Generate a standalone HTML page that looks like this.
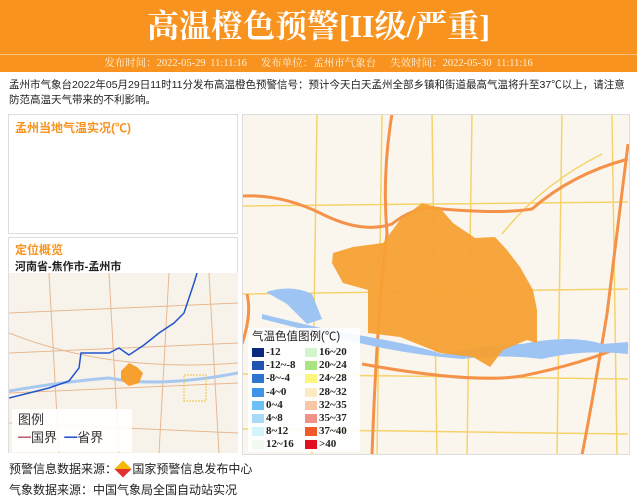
<!DOCTYPE html><html><head><meta charset="utf-8"><style>
*{margin:0;padding:0;box-sizing:border-box}
body{width:637px;height:500px;background:#fff;font-family:"Liberation Sans","Noto Sans CJK SC",sans-serif;position:relative;overflow:hidden}
.hd{position:absolute;left:0;top:0;width:637px;height:55px;background:#F7931E;color:#fff;text-align:center;font:bold 32px/52px "Liberation Serif","Noto Serif CJK SC",serif}
.ln{position:absolute;left:0;top:54px;width:637px;height:1px;background:#FBC37E}
.sb{position:absolute;left:0;top:55px;width:637px;height:17px;background:#F7931E;color:#FFF0DA;text-align:center;font:10.5px/17px "Liberation Serif","Noto Serif CJK SC",serif;word-spacing:2px}
.tx{position:absolute;left:9px;top:78px;width:622px;font-size:10.5px;line-height:15px;color:#222}
.bx{position:absolute;border:1px solid #ddd;background:#fff}
.t1{color:#F7931E;font-size:12px;font-weight:bold}
.ft{position:absolute;left:9px;font-size:12px;color:#222}
.lg{position:absolute;width:112px;height:124px;background:rgba(255,255,255,.9);font:bold 11px "Liberation Serif",serif;color:#222}
.lg div.r{position:absolute}
.lg i{display:inline-block;width:12px;height:9px;vertical-align:middle;margin-right:2px}
</style></head><body>
<div class="hd">高温橙色预警[II级/严重]</div><div class="ln"></div>
<div class="sb">发布时间：2022-05-29 11:11:16 &nbsp; 发布单位：孟州市气象台 &nbsp; 失效时间：2022-05-30 11:11:16</div>
<div class="tx">孟州市气象台2022年05月29日11时11分发布高温橙色预警信号：预计今天白天孟州全部乡镇和街道最高气温将升至37℃以上，请注意防范高温天气带来的不利影响。</div>
<div class="bx" style="left:8px;top:114px;width:230px;height:120px;padding:4px 6px"><div class="t1">孟州当地气温实况(℃)</div></div>
<div class="bx" style="left:8px;top:237px;width:230px;height:216px">
<div style="padding:3px 6px"><div class="t1">定位概览</div><div style="font-size:11px;font-weight:bold;color:#222">河南省-焦作市-孟州市</div></div>
<svg style="position:absolute;left:0;top:35px" width="229" height="180">
<rect width="229" height="180" fill="#F7F3EA"/>
<g stroke="#E8B890" fill="none" stroke-width="1"><path d="M0 40 L229 30M0 80 L229 70M0 120 L229 110M0 150 L229 160M40 0 L50 180M100 0 L110 180M160 0 L150 180M200 0 L210 180M0 60 Q100 100 229 90"/></g>
<path d="M0 118 Q60 108 100 105 Q150 115 229 100" stroke="#A8C8F0" stroke-width="3" fill="none"/>
<path d="M0 125 L20 120 L40 115 L60 108 L70 95 L72 80 L100 80 L110 75 L120 82 L135 72 L150 60 L165 50 L175 40 L180 25 L185 10 L188 0" stroke="#2255CC" stroke-width="1.5" fill="none"/>
<path d="M112 98 L120 90 L128 94 L134 100 L130 110 L120 113 L112 107Z" fill="#F7A030"/>
<rect x="175" y="102" width="22" height="26" fill="none" stroke="#F0C040" stroke-dasharray="2 1"/>
</svg>
<div style="position:absolute;left:3px;top:171px;width:120px;height:43px;background:rgba(255,255,255,.9);font-size:13px;color:#333;padding:2px 6px;line-height:18px">图例<br><span style="color:#C06070">━</span>国界 &nbsp;<span style="color:#2255CC">━</span>省界</div>
</div>
<div class="bx" style="left:242px;top:114px;width:388px;height:341px;overflow:hidden">
<svg width="388" height="341" style="position:absolute;left:-1px;top:-1px">
<rect width="388" height="341" fill="#FAF6EE"/>
<g stroke="#F5D36A" stroke-width="1.5" fill="none">
<path d="M0 92 L386 88M0 180 L386 175M0 260 L386 265M0 315 L386 320M75 0 L70 341M140 0 L135 341M190 0 L195 341M230 0 L225 341M320 0 L315 341M370 0 L375 341M260 120 Q300 70 360 40"/></g>
<g stroke="#F5924A" stroke-width="3" fill="none">
<path d="M0 82 Q40 80 80 100 Q120 120 150 110 Q175 90 200 95 Q260 100 290 95 Q330 60 386 45"/>
<path d="M150 0 Q140 60 145 120 Q135 200 130 341"/>
<path d="M0 230 Q10 200 5 180"/>
<path d="M120 250 Q230 270 280 262 Q340 250 386 230"/>
<path d="M386 30 Q375 120 365 200 Q350 290 340 341"/></g>
<path d="M24 178 Q50 170 70 180 L80 205 L65 210 L45 190 Z" fill="#9EC4F4"/>
<path d="M20 200 Q80 215 110 220 Q170 230 200 240 Q250 230 280 230 Q330 220 360 230 L386 228 L386 240 Q340 235 300 245 Q260 240 220 245 Q160 240 100 225 Q60 215 20 205Z" fill="#9EC4F4"/>
<path d="M180 89 L198 94 L211 109 L233 124 L253 123 L265 136 L278 153 L291 176 L295 196 L295 229 L285 226 L261 236 L248 253 L231 243 L198 239 L158 223 L126 219 L126 176 L101 169 L90 149 L91 139 L111 133 L141 129 L158 106 L171 96Z" fill="#F7A033" opacity=".95"/>
</svg>
<div class="lg" style="left:5px;top:213px"><div style="font:11.5px/16px 'Liberation Sans','Noto Sans CJK SC',sans-serif;padding:1px 4px;white-space:nowrap">气温色值图例(℃)</div>
<div class="r" style="left:4px;top:18px;line-height:13.2px"><i style="background:#0A2A80"></i>-12<br><i style="background:#1F55B0"></i>-12~-8<br><i style="background:#2E75D0"></i>-8~-4<br><i style="background:#3E95E8"></i>-4~0<br><i style="background:#6CC0F6"></i>0~4<br><i style="background:#A8DAF8"></i>4~8<br><i style="background:#D2F4FA"></i>8~12<br><i style="background:#F1FAEE"></i>12~16</div>
<div class="r" style="left:57px;top:18px;line-height:13.2px"><i style="background:#D2F4CC"></i>16~20<br><i style="background:#A8E482"></i>20~24<br><i style="background:#FAF680"></i>24~28<br><i style="background:#FCEBC2"></i>28~32<br><i style="background:#F8C6A4"></i>32~35<br><i style="background:#F2908A"></i>35~37<br><i style="background:#F05A28"></i>37~40<br><i style="background:#E01020"></i>&gt;40</div>
</div></div>
<div class="ft" style="top:460px">预警信息数据来源：<span style="display:inline-block;width:12px;height:12px;background:linear-gradient(135deg,#F5B800 50%,#E03030 50%);transform:rotate(45deg);vertical-align:-2px"></span> 国家预警信息发布中心</div>
<div class="ft" style="top:481px">气象数据来源：中国气象局全国自动站实况</div>
</body></html>
